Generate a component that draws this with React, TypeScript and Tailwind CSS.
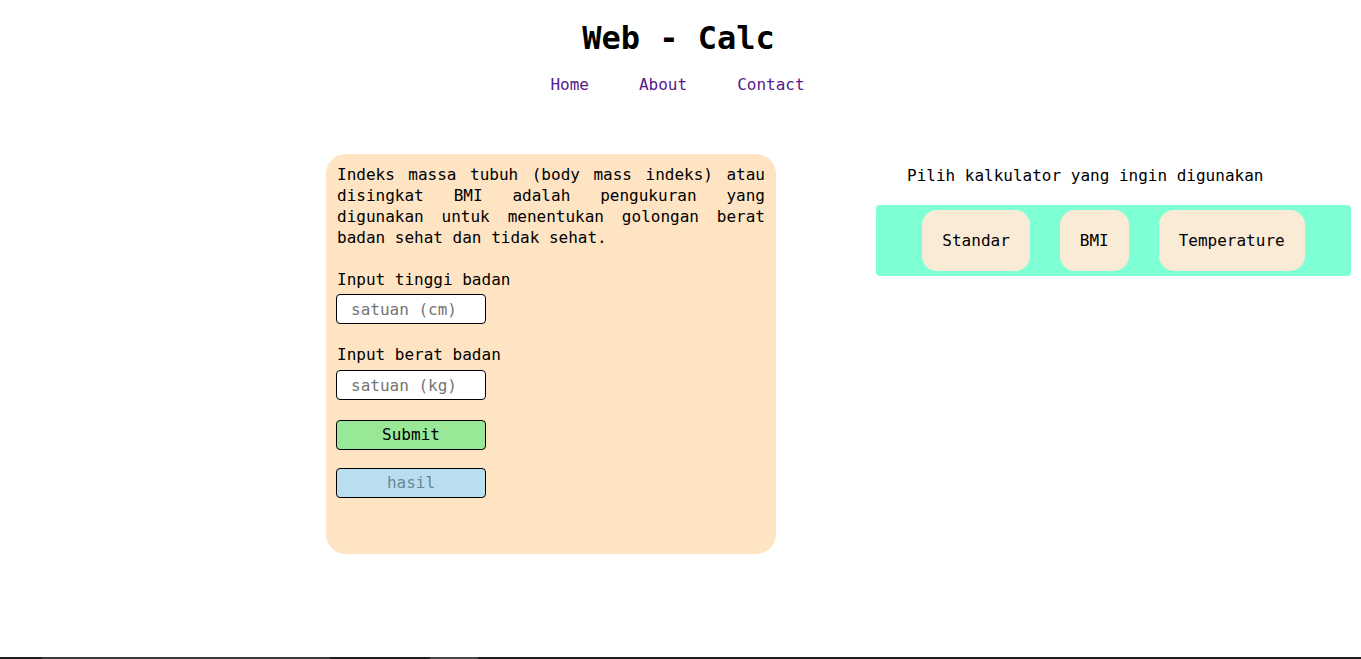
import React from "react";

export default function App() {
  const mono = { fontFamily: '"DejaVu Sans Mono", "Liberation Mono", monospace' };
  return (
    <div className="relative w-[1361px] h-[659px] overflow-hidden bg-white text-black" style={mono}>
      <header className="flex flex-col items-center pt-[16px]">
        <h1 className="-ml-[4px] text-[32px] leading-[44px] font-bold">Web - Calc</h1>
        <nav className="-ml-[6px] mt-[15px] flex gap-[50px] text-[16px] leading-[20px] text-[#551A8B]">
          <a href="#">Home</a>
          <a href="#">About</a>
          <a href="#">Contact</a>
        </nav>
      </header>
      <main className="mt-[59px] flex items-start pl-[326px] gap-[100px]">
        <section className="w-[450px] h-[400px] rounded-[20px] bg-[#FFE4C4] px-[11px] pt-[10px] text-[16px]">
          <p className="text-justify leading-[21px]">
            Indeks massa tubuh (body mass indeks) atau disingkat BMI adalah pengukuran yang digunakan untuk menentukan golongan berat badan sehat dan tidak sehat.
          </p>
          <div className="mt-[21px] leading-[21px]">Input tinggi badan</div>
          <input
            className="mt-[4px] block w-[150px] h-[30px] rounded-[4px] border border-black bg-white px-[14px] text-[16px] placeholder:text-[#757575] outline-none -ml-[1px]"
            placeholder="satuan (cm)"
            style={mono}
          />
          <div className="mt-[20px] leading-[21px]">Input berat badan</div>
          <input
            className="mt-[5px] block w-[150px] h-[30px] rounded-[4px] border border-black bg-white px-[14px] text-[16px] placeholder:text-[#757575] outline-none -ml-[1px]"
            placeholder="satuan (kg)"
            style={mono}
          />
          <button
            className="mt-[20px] block w-[150px] h-[30px] rounded-[4px] border border-black bg-[#98E898] text-[16px] -ml-[1px]"
            style={mono}
          >
            Submit
          </button>
          <div className="mt-[18px] flex w-[150px] h-[30px] items-center justify-center rounded-[4px] border border-black bg-[#B8DEF0] text-[16px] text-[#6f8794] -ml-[1px]">
            hasil
          </div>
        </section>
        <section className="w-[475px] pt-[11px]">
          <div className="pl-[31px] text-[16px] leading-[22px]">Pilih kalkulator yang ingin digunakan</div>
          <div className="mt-[18px] flex h-[71px] items-center justify-center gap-[30px] rounded-[4px] bg-[#7FFFD4]">
            <button className="h-[61px] rounded-[15px] bg-[#FAEBD7] px-[20px] text-[16px]" style={mono}>Standar</button>
            <button className="h-[61px] rounded-[15px] bg-[#FAEBD7] px-[20px] text-[16px]" style={mono}>BMI</button>
            <button className="h-[61px] rounded-[15px] bg-[#FAEBD7] px-[20px] text-[16px]" style={mono}>Temperature</button>
          </div>
        </section>
      </main>
      <footer className="absolute bottom-0 left-0 flex h-[2px] w-full bg-[#1e1e1e]">
        <div className="ml-[42px] w-[288px] bg-[#3a3a3a]" />
        <div className="ml-[100px] w-[48px] bg-[#444]" />
      </footer>
    </div>
  );
}
